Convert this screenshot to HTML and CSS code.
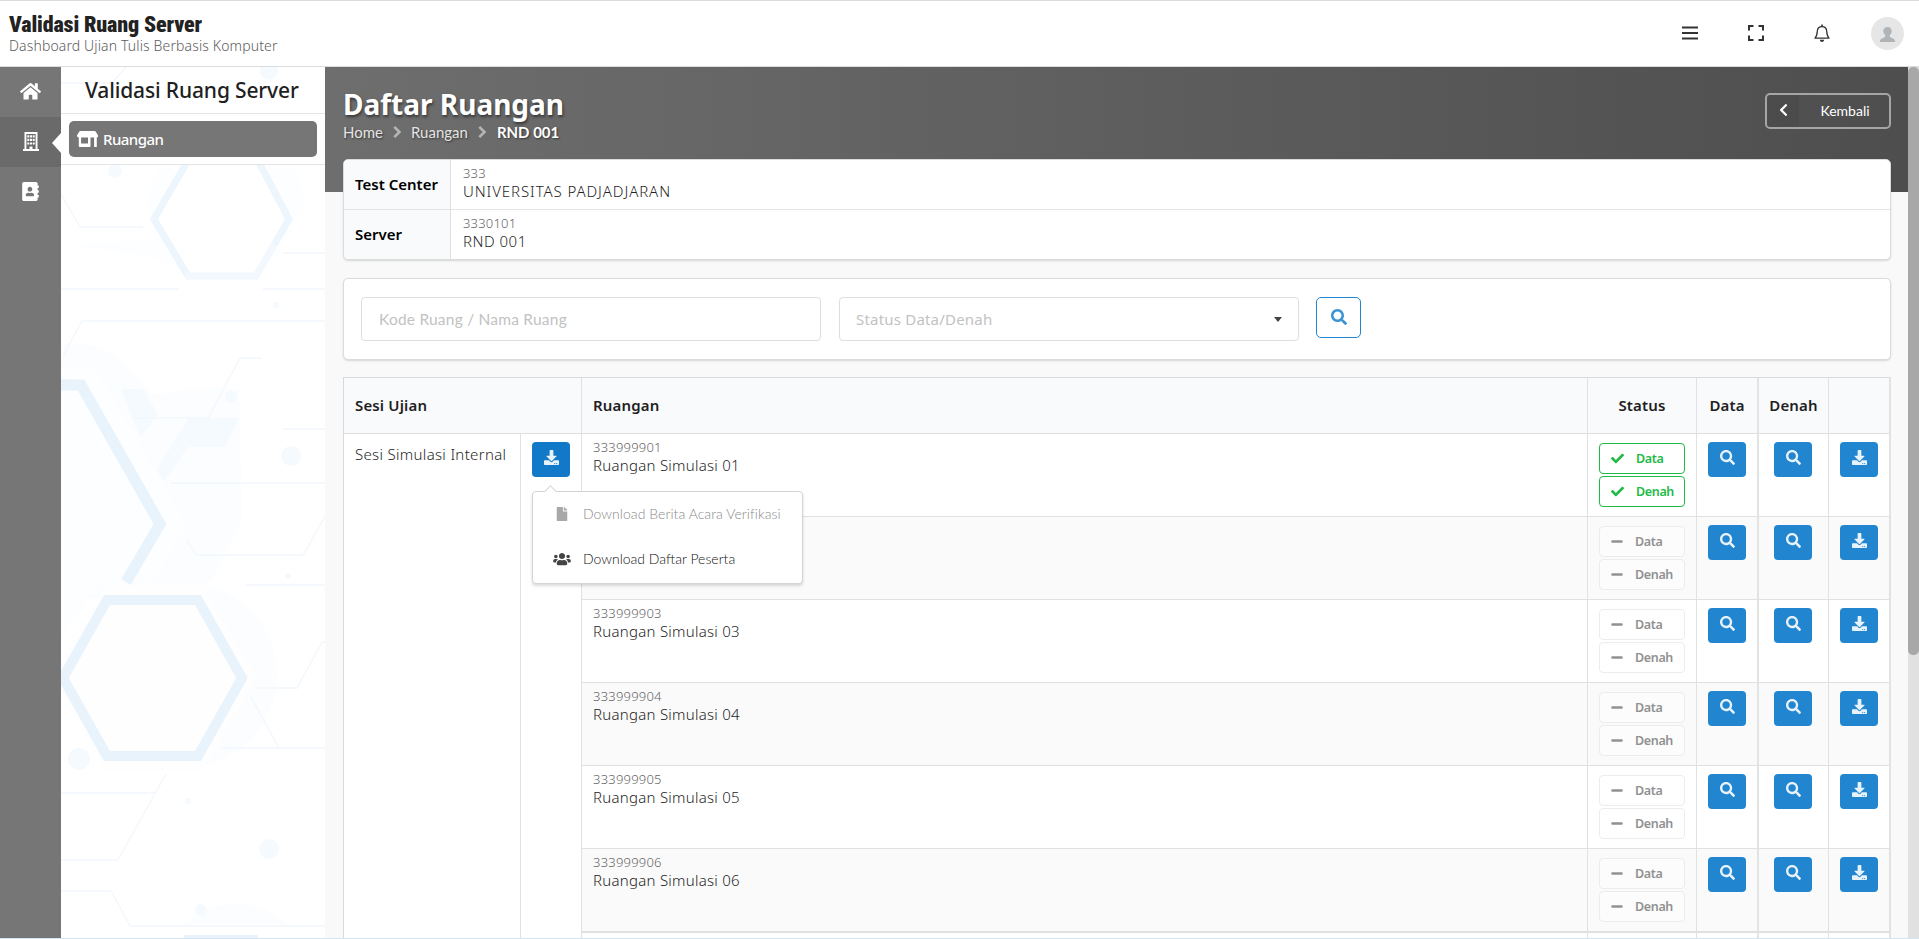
FILE: index.html
```html
<!DOCTYPE html>
<html lang="id">
<head>
<meta charset="utf-8">
<title>Validasi Ruang Server</title>
<link rel="stylesheet" href="styles.css">
</head>
<body>
<svg class="sprite" width="0" height="0">
  <symbol id="search" viewBox="0 0 512 512"><path d="M505 442.7L405.3 343c-4.5-4.5-10.6-7-17-7H372c27.6-35.3 44-79.7 44-128C416 93.1 322.9 0 208 0S0 93.1 0 208s93.1 208 208 208c48.3 0 92.7-16.4 128-44v16.3c0 6.4 2.5 12.5 7 17l99.7 99.7c9.4 9.4 24.6 9.4 33.9 0l28.3-28.3c9.4-9.4 9.4-24.6.1-34zM208 336c-70.7 0-128-57.2-128-128 0-70.7 57.2-128 128-128 70.7 0 128 57.2 128 128 0 70.7-57.2 128-128 128z"/></symbol>
  <symbol id="download" viewBox="0 0 512 512"><path d="M216 0h80c13.3 0 24 10.7 24 24v168h87.7c17.8 0 26.7 21.5 14.1 34.1L269.7 378.3c-7.5 7.5-19.8 7.5-27.3 0L90.1 226.1c-12.6-12.6-3.7-34.1 14.1-34.1H192V24c0-13.3 10.7-24 24-24zm296 376v112c0 13.3-10.7 24-24 24H24c-13.3 0-24-10.7-24-24V376c0-13.3 10.7-24 24-24h146.7l49 49c20.1 20.1 52.5 20.1 72.6 0l49-49H488c13.3 0 24 10.7 24 24zm-124 88c0-11-9-20-20-20s-20 9-20 20 9 20 20 20 20-9 20-20zm64 0c0-11-9-20-20-20s-20 9-20 20 9 20 20 20 20-9 20-20z"/></symbol>
  <symbol id="check" viewBox="0 0 512 512"><path d="M173.898 439.404l-166.4-166.4c-9.997-9.997-9.997-26.206 0-36.204l36.203-36.204c9.997-9.998 26.207-9.998 36.204 0L192 312.69 432.095 72.596c9.997-9.997 26.207-9.997 36.204 0l36.203 36.204c9.997 9.997 9.997 26.206 0 36.204l-294.4 294.401c-9.998 9.997-26.207 9.997-36.204-.001z"/></symbol>
  <symbol id="minus" viewBox="0 0 448 512"><path d="M416 208H32c-17.7 0-32 14.3-32 32v32c0 17.7 14.3 32 32 32h384c17.7 0 32-14.3 32-32v-32c0-17.7-14.3-32-32-32z"/></symbol>
  <symbol id="home" viewBox="0 0 576 512"><path d="M280.37 148.26L96 300.11V464a16 16 0 0 0 16 16l112.06-.29a16 16 0 0 0 15.92-16V368a16 16 0 0 1 16-16h64a16 16 0 0 1 16 16v95.64a16 16 0 0 0 16 16.05L464 480a16 16 0 0 0 16-16V300L295.67 148.26a12.19 12.19 0 0 0-15.3 0zM571.6 251.47L488 182.56V44.05a12 12 0 0 0-12-12h-56a12 12 0 0 0-12 12v72.61L318.47 43a48 48 0 0 0-61 0L4.34 251.47a12 12 0 0 0-1.6 16.9l25.5 31A12 12 0 0 0 45.15 301l235.22-193.74a12.19 12.19 0 0 1 15.3 0L530.9 301a12 12 0 0 0 16.9-1.6l25.5-31a12 12 0 0 0-1.7-16.93z"/></symbol>
  <symbol id="building" viewBox="0 0 16 19"><path fill-rule="evenodd" d="M1.500 0h13v17.100H16V19H0v-1.900h1.500zM3.400 1.900v15.200h3.100V14.500h3v2.600h3.100V1.900zM4.300 3.200h2v2.200h-2zM7 3.200h2v2.200H7zM9.700 3.200h2v2.200h-2zM4.300 6.800h2V9h-2zM7 6.800h2V9H7zM9.700 6.800h2V9h-2zM4.300 10.400h2v2.200h-2zM7 10.400h2v2.200H7zM9.700 10.400h2v2.200h-2z"/></symbol>
  <symbol id="book" viewBox="0 0 448 512"><path fill-rule="evenodd" d="M436 160c6.600 0 12-5.400 12-12v-40c0-6.600-5.400-12-12-12h-20V48c0-26.500-21.500-48-48-48H48C21.500 0 0 21.500 0 48v416c0 26.500 21.500 48 48 48h320c26.500 0 48-21.500 48-48v-48h20c6.600 0 12-5.400 12-12v-40c0-6.600-5.400-12-12-12h-20v-64h20c6.600 0 12-5.400 12-12v-40c0-6.600-5.400-12-12-12h-20v-64h20zm-228-32c35.300 0 64 28.700 64 64s-28.700 64-64 64-64-28.700-64-64 28.700-64 64-64zm112 236.800c0 10.600-10 19.200-22.400 19.200H118.400C106 384 96 375.400 96 364.800v-19.200c0-31.800 30.100-57.600 67.200-57.600h5c12.300 5.100 25.700 8 39.800 8s27.600-2.900 39.800-8h5c37.100 0 67.200 25.800 67.200 57.600v19.200z"/></symbol>
  <symbol id="store" viewBox="0 0 21 16"><path fill-rule="evenodd" d="M3.200 0h14.600q.5 0 .8.500l2.200 3.600q.7 2.300-1 2.500v9.100q0 .3-.4.300h-1.900q-.4 0-.4-.4V6.600h-3.600v8.700q0 .7-.7.700H2.500q-.7 0-.7-.7V6.600Q-.5 6.200.2 4.100L2.400.5q.300-.5.800-.5zM4.100 6.600v6h6.900v-6z"/></symbol>
  <symbol id="file" viewBox="0 0 384 512"><path d="M224 136V0H24C10.700 0 0 10.700 0 24v464c0 13.300 10.700 24 24 24h336c13.300 0 24-10.700 24-24V160H248c-13.200 0-24-10.800-24-24zm160-14.100v6.100H256V0h6.100c6.400 0 12.500 2.500 17 7l97.900 98c4.500 4.500 7 10.600 7 16.900z"/></symbol>
  <symbol id="users" viewBox="0 0 640 512"><path d="M96 224c35.300 0 64-28.700 64-64s-28.700-64-64-64-64 28.700-64 64 28.700 64 64 64zm448 0c35.300 0 64-28.700 64-64s-28.700-64-64-64-64 28.700-64 64 28.700 64 64 64zm32 32h-64c-17.600 0-33.500 7.100-45.100 18.600 40.300 22.100 68.900 62 75.100 109.400h66c17.700 0 32-14.300 32-32v-32c0-35.300-28.700-64-64-64zm-256 0c61.900 0 112-50.100 112-112S381.900 32 320 32 208 82.100 208 144s50.100 112 112 112zm76.800 32h-8.300c-20.800 10-43.900 16-68.500 16s-47.600-6-68.500-16h-8.300C179.600 288 128 339.600 128 403.200V432c0 26.500 21.500 48 48 48h288c26.500 0 48-21.500 48-48v-28.800c0-63.600-51.600-115.200-115.200-115.200zm-223.700-13.400C161.500 263.100 145.600 256 128 256H64c-35.300 0-64 28.700-64 64v32c0 17.700 14.300 32 32 32h65.900c6.300-47.400 34.900-87.300 75.200-109.400z"/></symbol>
  <symbol id="left" viewBox="0 0 320 512"><path d="M34.520 239.030L228.870 44.690c9.370-9.370 24.570-9.370 33.940 0l22.670 22.670c9.360 9.360 9.370 24.520.04 33.900L131.490 256l154.020 154.750c9.340 9.380 9.320 24.540-.04 33.900l-22.670 22.670c-9.370 9.370-24.570 9.370-33.940 0L34.520 272.970c-9.370-9.370-9.370-24.570 0-33.940z"/></symbol>
  <symbol id="right" viewBox="0 0 10 16"><path d="M2.300 2.800 7.500 8l-5.200 5.200" fill="none" stroke="currentColor" stroke-width="2.600"/></symbol>
</svg>

<header class="topbar">
  <div class="brand">
    <div class="brand-name">Validasi Ruang Server</div>
    <div class="brand-sub">Dashboard Ujian Tulis Berbasis Komputer</div>
  </div>
  <nav class="tools">
    <svg width="16" height="16" viewBox="0 0 16 16"><path d="M0 2.500h16M0 8h16M0 13.500h16" stroke="#333" stroke-width="2.200"/></svg>
    <svg width="16" height="16" viewBox="0 0 16 16"><path d="M1 5.500V1h4.500M10.500 1H15v4.500M15 10.500V15h-4.500M5.500 15H1v-4.500" fill="none" stroke="#333" stroke-width="2"/></svg>
    <svg width="16" height="18" viewBox="0 0 16 18"><path d="M1 14.200c1.900-2 2.100-4.200 2.300-7C3.500 4.500 5.300 2.700 8 2.700s4.500 1.800 4.700 4.500c.2 2.800.4 5 2.300 7z" fill="none" stroke="#333" stroke-width="1.300" stroke-linejoin="round"/><path d="M7.200.5h1.600V3H7.200zM5.700 15.800h4.600Q9.700 18 8 18t-2.300-2.200z" fill="#333"/></svg>
    <svg class="avatar" width="33" height="33" viewBox="0 0 33 33"><circle cx="16.500" cy="16.500" r="16.500" fill="#e6e6e6"/><path d="M16.500 10c2.600 0 4.200 1.700 4.200 4 0 2-1 3.200-2 4.200v1.300c0 1 5.500 1.500 5.500 5.500H8.800c0-4 5.500-4.500 5.500-5.500v-1.300c-1-1-2-2.200-2-4.200 0-2.300 1.600-4 4.200-4z" fill="#aeb4b7"/></svg>
  </nav>
</header>

<div class="shell">
  <aside class="rail">
    <a class="rail-item"><svg width="21" height="18.700"><use href="#home"/></svg></a>
    <a class="rail-item active"><svg width="16" height="19"><use href="#building"/></svg></a>
    <a class="rail-item"><svg width="17" height="19"><use href="#book"/></svg></a>
  </aside>

  <aside class="panel">
    <svg class="decor" viewBox="61 67 264 871" width="264" height="871" fill="none">
      <g fill="#fbfdff">
        <path d="M61 345c40-8 70 20 90 50l38-6h50l3 130-30 60-40 20H61z"/>
        <circle cx="185" cy="675" r="92"/>
        <path d="M61 245l80 10 60 20 70-10 35-60-20-80h-110l-30 75 10 40z" fill="#fdfeff"/>
        <path d="M180 926q60-45 110 0z"/>
      </g>
      <path d="M61 368h34l92 157-35 58h-8M98 583l-37 55V391h20l78 133-35 60z" fill="#fdfeff"/>
      <path d="M106 585h96l54 93-54 93h-96l-54-93z" fill="#fefeff"/>
      <path d="M154 219l36-61h66l33 61-33 57h-66z" fill="#fff"/>
      <g fill="#f5faff">
        <path d="M189 418h50l-14 29h-37l-24 34-7-12z"/><path d="M121 389h22l15 26-18 22z"/>
        <circle cx="269" cy="71" r="9"/><circle cx="115" cy="171" r="7"/><circle cx="291" cy="456" r="10"/><circle cx="231" cy="397" r="6"/><circle cx="79" cy="759" r="11"/><circle cx="269" cy="849" r="10"/><circle cx="201" cy="910" r="6"/><circle cx="188" cy="801" r="3"/><circle cx="288" cy="576" r="3"/><circle cx="276" cy="305" r="3"/>
      </g>
      <path stroke="#f2f8fd" stroke-width="1.500" d="M61 83h51l14-16M61 194l19 33h63M61 289h118M263 289h62M63 356l19-35h243M283 253h42M131 418h77l32-60h22M283 429h42M170 483h155M187 540l9 15h107l9-15 13-24M246 585h79M256 688h41l25-46h3M251 697l28 51M222 748h103M61 793h94M166 774l-48 86H61M61 891h50l19 35h195"/>
      <path stroke="#edf6fd" stroke-width="7" d="M188 276l-34-57 36-62M256 157l33 62-15 26"/>
      <path stroke="#f2f8fe" stroke-width="7" d="M274 245l-18 31h-70"/>
      <path stroke="#e8f3fc" stroke-width="11" d="M61 385h20l79 139-34 58"/>
      <path stroke="#e8f3fc" stroke-width="10" d="M107 600h91l44 78-44 78h-91l-44-78z"/>
      <path stroke="#eaf3fb" stroke-width="4" d="M184 937h74"/>
    </svg>
    <div class="panel-title">Validasi Ruang Server</div>
    <div class="panel-menu"><a class="panel-item"><svg width="21" height="16"><use href="#store"/></svg>Ruangan</a></div>
  </aside>

  <main class="main">
    <div class="page-head">
      <div>
        <h1>Daftar Ruangan</h1>
        <div class="crumbs"><span>Home</span><svg width="10" height="16"><use href="#right"/></svg><span>Ruangan</span><svg width="10" height="16"><use href="#right"/></svg><b>RND 001</b></div>
      </div>
      <a class="back"><span class="back-icon"><svg width="9" height="14"><use href="#left"/></svg></span><span class="back-text">Kembali</span></a>
    </div>

    <section class="card info">
      <div class="info-row"><div class="info-key">Test Center</div><div class="info-val"><small>333</small><span class="univ">UNIVERSITAS PADJADJARAN</span></div></div>
      <div class="info-row"><div class="info-key">Server</div><div class="info-val"><small>3330101</small><span>RND 001</span></div></div>
    </section>

    <section class="card filter">
      <div class="field lato">Kode Ruang / Nama Ruang</div>
      <div class="field select">Status Data/Denah<i></i></div>
      <a class="find"><svg width="16" height="16"><use href="#search"/></svg></a>
    </section>

    <table class="rooms">
      <colgroup><col class="w-sesi"><col class="w-dl"><col><col class="w-status"><col class="w-data"><col class="w-denah"><col class="w-last"></colgroup>
      <thead><tr><th colspan="2">Sesi Ujian</th><th>Ruangan</th><th class="mid">Status</th><th class="mid">Data</th><th class="mid thick">Denah</th><th></th></tr></thead>
      <tbody>
        <tr>
          <td class="sesi" rowspan="7">Sesi Simulasi Internal</td>
          <td class="btn-cell dl" rowspan="7"><a class="btn pressed"><svg width="15" height="15"><use href="#download"/></svg></a>
            <div class="menu">
              <a class="menu-item disabled"><svg width="18" height="14"><use href="#file"/></svg><span>Download Berita Acara Verifikasi</span></a>
              <a class="menu-item"><svg width="18" height="14"><use href="#users"/></svg><span>Download Daftar Peserta</span></a>
            </div>
          </td>
          <td class="room"><small>333999901</small>Ruangan Simulasi 01</td>
          <td class="status"><div class="tag ok"><svg width="13" height="13"><use href="#check"/></svg>Data</div><div class="tag ok"><svg width="13" height="13"><use href="#check"/></svg>Denah</div></td>
          <td class="btn-cell"><a class="btn"><svg width="15" height="15"><use href="#search"/></svg></a></td>
          <td class="btn-cell thick"><a class="btn"><svg width="15" height="15"><use href="#search"/></svg></a></td>
          <td class="btn-cell"><a class="btn"><svg width="15" height="15"><use href="#download"/></svg></a></td>
        </tr>
        <tr class="alt">
          <td class="room"></td>
          <td class="status"><div class="tag"><svg width="12" height="13"><use href="#minus"/></svg>Data</div><div class="tag"><svg width="12" height="13"><use href="#minus"/></svg>Denah</div></td>
          <td class="btn-cell"><a class="btn"><svg width="15" height="15"><use href="#search"/></svg></a></td>
          <td class="btn-cell thick"><a class="btn"><svg width="15" height="15"><use href="#search"/></svg></a></td>
          <td class="btn-cell"><a class="btn"><svg width="15" height="15"><use href="#download"/></svg></a></td>
        </tr>
        <tr>
          <td class="room"><small>333999903</small>Ruangan Simulasi 03</td>
          <td class="status"><div class="tag"><svg width="12" height="13"><use href="#minus"/></svg>Data</div><div class="tag"><svg width="12" height="13"><use href="#minus"/></svg>Denah</div></td>
          <td class="btn-cell"><a class="btn"><svg width="15" height="15"><use href="#search"/></svg></a></td>
          <td class="btn-cell thick"><a class="btn"><svg width="15" height="15"><use href="#search"/></svg></a></td>
          <td class="btn-cell"><a class="btn"><svg width="15" height="15"><use href="#download"/></svg></a></td>
        </tr>
        <tr class="alt">
          <td class="room"><small>333999904</small>Ruangan Simulasi 04</td>
          <td class="status"><div class="tag"><svg width="12" height="13"><use href="#minus"/></svg>Data</div><div class="tag"><svg width="12" height="13"><use href="#minus"/></svg>Denah</div></td>
          <td class="btn-cell"><a class="btn"><svg width="15" height="15"><use href="#search"/></svg></a></td>
          <td class="btn-cell thick"><a class="btn"><svg width="15" height="15"><use href="#search"/></svg></a></td>
          <td class="btn-cell"><a class="btn"><svg width="15" height="15"><use href="#download"/></svg></a></td>
        </tr>
        <tr>
          <td class="room"><small>333999905</small>Ruangan Simulasi 05</td>
          <td class="status"><div class="tag"><svg width="12" height="13"><use href="#minus"/></svg>Data</div><div class="tag"><svg width="12" height="13"><use href="#minus"/></svg>Denah</div></td>
          <td class="btn-cell"><a class="btn"><svg width="15" height="15"><use href="#search"/></svg></a></td>
          <td class="btn-cell thick"><a class="btn"><svg width="15" height="15"><use href="#search"/></svg></a></td>
          <td class="btn-cell"><a class="btn"><svg width="15" height="15"><use href="#download"/></svg></a></td>
        </tr>
        <tr class="alt">
          <td class="room"><small>333999906</small>Ruangan Simulasi 06</td>
          <td class="status"><div class="tag"><svg width="12" height="13"><use href="#minus"/></svg>Data</div><div class="tag"><svg width="12" height="13"><use href="#minus"/></svg>Denah</div></td>
          <td class="btn-cell"><a class="btn"><svg width="15" height="15"><use href="#search"/></svg></a></td>
          <td class="btn-cell thick"><a class="btn"><svg width="15" height="15"><use href="#search"/></svg></a></td>
          <td class="btn-cell"><a class="btn"><svg width="15" height="15"><use href="#download"/></svg></a></td>
        </tr>
        <tr class="next"><td class="room"></td><td></td><td></td><td class="thick"></td><td></td></tr>
      </tbody>
    </table>
  </main>
  <div class="scrollbar"><div class="thumb"></div></div>
</div>
</body>
</html>
```
FILE: styles.css
```css
* { box-sizing: border-box; }
html, body { margin: 0; height: 939px; overflow: hidden; }
body {
  display: flex;
  flex-direction: column;
  font: 350 15px/19px "Noto Sans", sans-serif;
  color: #1f1f1f;
  background: #fff;
  border-top: 1px solid #dcdcdc;
  border-bottom: 1px solid #d3e4f2;
}
svg { display: block; fill: currentColor; flex: none; }
.sprite { position: absolute; }

.topbar {
  height: 66px;
  flex: none;
  display: flex;
  justify-content: space-between;
  padding: 12px 15px 0 9px;
  border-bottom: 1px solid #dcdcdc;
}
.brand-name { padding-top: 1px; font: 900 22px/22px "Roboto Condensed", Roboto, sans-serif; letter-spacing: -.12px; color: #222; }
.brand-sub { font-size: 14px; line-height: 19px; letter-spacing: .13px; color: #5c5c5c; }
.tools { display: flex; align-items: center; gap: 50px; height: 40px; }
.avatar { margin-left: -9px; }

.shell { flex: 1; display: flex; min-height: 0; overflow: hidden; }
.rail { width: 61px; flex: none; background: #767676; color: #fff; }
.rail-item { display: flex; height: 50px; padding-bottom: 2px; align-items: center; justify-content: center; }
.rail-item.active { position: relative; background: #6a6a6a; }
.rail-item.active::after {
  content: "";
  position: absolute;
  right: 0;
  top: 16px;
  border: 10px solid transparent;
  border-right: 9px solid #fff;
  border-left: 0;
}

.panel { width: 264px; flex: none; position: relative; background: #fff; }
.decor { position: absolute; left: 0; top: 0; fill: none; }
.panel-title {
  position: relative;
  height: 47px;
  padding: 10px 0 0 24px;
  font: 550 21px/26px "Noto Sans", sans-serif;
  letter-spacing: -.15px;
  white-space: nowrap;
  border-bottom: 1px solid #e4e4e4;
}
.panel-menu { position: relative; height: 51px; padding: 7px 8px; background: #fff; border-bottom: 1px solid #e4e4e4; }
.panel-item {
  display: flex;
  align-items: center;
  gap: 5px;
  height: 36px;
  padding-left: 8px;
  border-radius: 5px;
  background: #767676;
  color: #fff;
  font-size: 15px;
  font-weight: 500;
  letter-spacing: -.55px;
}

.main {
  flex: 1;
  min-width: 0;
  padding: 20px 17px 0 18px;
  background: linear-gradient(90deg, #6e6e6e, #4e4e4e) no-repeat 0 0 / 100% 125px, #f9f9f9;
}
.page-head { display: flex; justify-content: space-between; height: 72px; color: #fff; }
h1 { margin: 0; font: 700 28px/34px "Noto Sans", sans-serif; letter-spacing: 0; text-shadow: 1px 2px 3px rgba(0, 0, 0, .5); }
.crumbs {
  display: flex;
  align-items: center;
  height: 22px;
  font: 400 15px/22px Lato, sans-serif;
  color: #e4e4e4;
  text-shadow: 1px 1px 2px rgba(0, 0, 0, .5);
}
.crumbs svg { margin: 0 9px; color: #b5b5b5; }
.crumbs b { color: #fff; margin-left: 1px; }
.back {
  display: flex;
  width: 126px;
  height: 36px;
  margin-top: 6px;
  border: 2px solid #a5a5a5;
  border-radius: 5px;
  font: 400 14px/32px Lato, sans-serif;
}
.back-icon { display: flex; align-items: center; justify-content: center; width: 32px; background: rgba(0, 0, 0, .05); padding-bottom: 2px; }
.back-text { flex: 1; text-align: center; padding-left: 2px; }

.card { background: #fff; border: 1px solid #dcdcdd; border-radius: 5px; box-shadow: 0 1px 2px rgba(34, 36, 38, .16); }
.info { height: 101px; overflow: hidden; }
.info-row { display: flex; height: 49px; }
.info-row + .info-row { height: 50px; border-top: 1px solid #e4e4e5; }
.info-key { width: 107px; padding: 0 0 1px 11px; display: flex; align-items: center; font-weight: 600; background: #f9fafb; border-right: 1px solid #dedfe0; color: #000; }
.info-val { padding: 4px 0 0 12px; }
small { display: block; font-size: 13px; line-height: 18px; letter-spacing: .2px; color: #666; }
.info-val span { display: block; line-height: 19px; letter-spacing: .5px; }
.info-val .univ { letter-spacing: .92px; }

.filter { display: flex; height: 82px; margin-top: 18px; padding: 18px 17px; gap: 18px; }
.field {
  display: flex;
  align-items: center;
  justify-content: space-between;
  width: 460px;
  height: 44px;
  padding: 0 16px 0 17px;
  border: 1px solid #dedede;
  border-radius: 4px;
  color: #c2c2c2;
  font-weight: 400;
}
.select { padding-left: 16px; letter-spacing: .2px; }
.field.lato { font-family: Lato, sans-serif; font-size: 15.500px; letter-spacing: .22px; }
.select i { border: 4px solid transparent; border-top: 5px solid #444; border-bottom: 0; }
.find { display: flex; width: 45px; height: 41px; margin-left: -1px; justify-content: center; padding-top: 11px; border: 1px solid #2185d0; border-radius: 5px; color: #3b93d6; }

.rooms {
  width: 1548px;
  margin-top: 17px;
  table-layout: fixed;
  border-collapse: separate;
  border-spacing: 0;
  background: #fff;
  border: 1px solid #d8d9da;
  border-right: 2px solid #e2e2e3;
  border-bottom: 0;
}
.w-sesi { width: 176px; }
.w-dl, .w-data, .w-last { width: 61px; }
.w-status { width: 109px; }
.w-denah { width: 71px; }
th { height: 55px; padding: 0 11px; text-align: left; font-weight: 600; letter-spacing: .15px; background: #f9fafb; border-left: 1px solid #e0e1e2; }
th.mid { text-align: center; padding: 0; }
tr > :first-child:not(.room) { border-left: 0; }
td { height: 83px; padding: 0; vertical-align: top; border-top: 1px solid #dfe0e1; border-left: 1px solid #e0e1e2; }
.rooms .thick { border-left: 2px solid #e2e3e3; }
.alt td { background: #fafafa; }
.sesi { padding: 11px 0 0 11px; white-space: nowrap; letter-spacing: .32px; }
.room { padding: 4px 0 0 11px; letter-spacing: .26px; }
.btn-cell { padding-top: 8px; }
.btn { display: flex; justify-content: center; width: 38px; height: 35px; margin: 0 0 0 11px; padding-top: 8px; border-radius: 4px; background: #2185d0; color: #e8f2fa; }
.thick .btn { margin-left: 15px; }
.btn.pressed { background: #1179c8; }
.status { padding: 9px 0 0 11px; }
.tag {
  display: flex;
  align-items: center;
  gap: 12px;
  width: 86px;
  height: 31px;
  margin-bottom: 2px;
  padding: 0 0 1px 11px;
  border: 1px solid #ececec;
  border-radius: 4px;
  background: #fff;
  font-size: 12.500px;
  font-weight: 600;
  letter-spacing: -.35px;
  color: #919191;
}
.alt .tag { background: #fcfcfc; }
.tag.ok { color: #21ba45; border-color: #21ba45; }
.next td { height: 40px; border-top-width: 2px; }

.dl { position: relative; }
.menu {
  position: absolute;
  left: 11px;
  top: 57px;
  width: 271px;
  height: 93px;
  background: #fff;
  border: 1px solid #d4d4d5;
  border-radius: 4px;
  box-shadow: 0 2px 3px rgba(34, 36, 38, .16);
  font: 300 14px/43px Lato, sans-serif;
}
.menu::before {
  content: "";
  position: absolute;
  left: 13px;
  top: -5px;
  width: 8px;
  height: 8px;
  background: #fff;
  border: 1px solid #d4d4d5;
  border-right: 0;
  border-bottom: 0;
  transform: rotate(45deg);
}
.menu-item { display: flex; align-items: center; gap: 12px; height: 43px; padding-left: 20px; white-space: nowrap; color: #111; }
.menu-item + .menu-item { height: 47px; }
.menu-item svg { color: #444; }
.menu-item.disabled { color: #8a8a8a; letter-spacing: .05px; }
.menu-item.disabled svg { color: #a8a8a8; }

.scrollbar { width: 11px; flex: none; background: #e1e1e1; }
.thumb { height: 588px; border-radius: 5px; background: #a8a8a8; }
```
